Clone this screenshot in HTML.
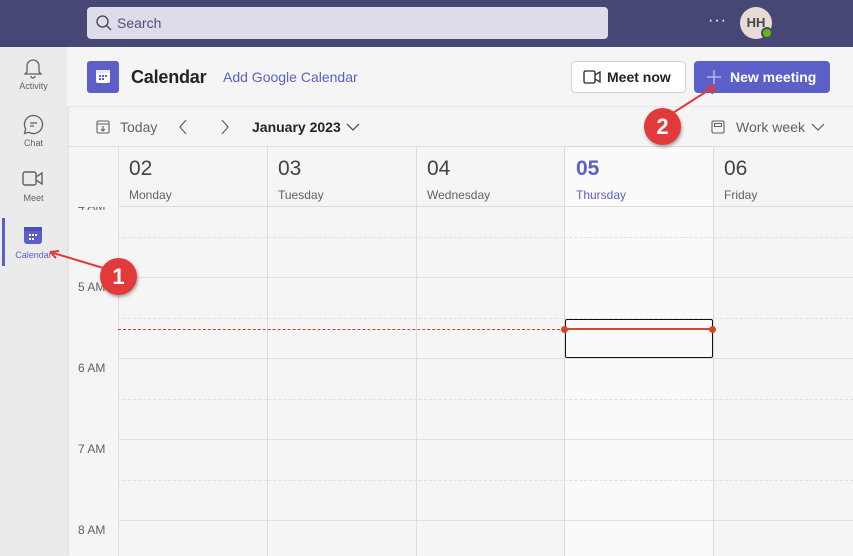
<!DOCTYPE html>
<html><head><style>
*{box-sizing:border-box;margin:0;padding:0}
body{width:853px;height:556px;overflow:hidden;background:#f5f5f5;font-family:"Liberation Sans",sans-serif;position:relative;color:#242424}
.abs{position:absolute}
.top{left:0;top:0;width:853px;height:47px;background:#464775}
.search{left:87px;top:7px;width:521px;height:32px;background:#dcdcea;border-radius:4px}
.side{left:0;top:47px;width:67px;height:509px;background:#ebebeb;box-shadow:1px 0 3px rgba(0,0,0,.12)}
.si{width:67px;text-align:center;font-size:9px;color:#616161}
.hl{background:#e0e0e0}
.vl{background:#dcdcdc;width:1px}
.dash{border-top:1px dashed #e1e1e1;height:0}
.hour{font-size:12px;color:#616161;left:78px}
.day{font-size:21px;color:#424242}
.dn{font-size:12px;color:#616161}
.badge{width:37px;height:37px;border-radius:50%;background:#e23a3a;color:#fff;font-size:22px;font-weight:bold;text-align:center;line-height:37px;box-shadow:1px 2px 3px rgba(0,0,0,.35)}
</style></head><body>
<div class="abs top"></div>
<div class="abs search"></div>
<svg class="abs" style="left:95px;top:14px" width="18" height="18" viewBox="0 0 18 18"><circle cx="7.5" cy="7.5" r="5.5" fill="none" stroke="#444" stroke-width="1.3"/><path d="M11.5 11.5L16 16" stroke="#444" stroke-width="1.3"/></svg>
<div class="abs" style="left:117px;top:15px;font-size:14px;color:#4f4f7a">Search</div>
<div class="abs" style="left:708px;top:12px;color:#fff;font-size:16px;letter-spacing:1px">···</div>
<div class="abs" style="left:740px;top:7px;width:32px;height:32px;border-radius:50%;background:#e6dcd5;color:#444;font-size:13px;font-weight:bold;text-align:center;line-height:32px">HH</div>
<div class="abs" style="left:761px;top:27px;width:12px;height:12px;border-radius:50%;background:#6bb700;border:2px solid #464775"></div>

<div class="abs side"></div>
<svg class="abs" style="left:23px;top:57px" width="20" height="22" viewBox="0 0 20 22"><path d="M4 15V9a6 6 0 0112 0v6l2 2H2z M8 19a2 2 0 004 0" fill="none" stroke="#616161" stroke-width="1.3"/></svg>
<div class="abs si" style="left:0;top:81px">Activity</div>
<svg class="abs" style="left:23px;top:114px" width="21" height="21" viewBox="0 0 21 21"><path d="M10.5 1.5a9 9 0 11-4.5 16.8L1.5 19.5 2.7 15A9 9 0 0110.5 1.5z M7 9h7 M7 12h4" fill="none" stroke="#616161" stroke-width="1.3"/></svg>
<div class="abs si" style="left:0;top:138px">Chat</div>
<svg class="abs" style="left:22px;top:170px" width="22" height="17" viewBox="0 0 22 17"><rect x="1" y="2" width="13" height="13" rx="2" fill="none" stroke="#616161" stroke-width="1.4"/><path d="M14 7l6-4v11l-6-4" fill="none" stroke="#616161" stroke-width="1.4"/></svg>
<div class="abs si" style="left:0;top:193px">Meet</div>
<div class="abs" style="left:2px;top:218px;width:3px;height:48px;background:#5b5fc7"></div>
<svg class="abs" style="left:23px;top:226px" width="20" height="19" viewBox="0 0 20 19"><rect x="1" y="1" width="18" height="17" rx="3" fill="#5b5fc7"/><rect x="1" y="1" width="18" height="4" fill="#4b4fb5"/><g fill="#fff"><rect x="6" y="8" width="2" height="2"/><rect x="9" y="8" width="2" height="2"/><rect x="12" y="8" width="2" height="2"/><rect x="6" y="12" width="2" height="2"/><rect x="9" y="12" width="2" height="2"/></g></svg>
<div class="abs si" style="left:0;top:250px;color:#5b5fc7">Calendar</div>

<div class="abs" style="left:67px;top:47px;width:786px;height:60px;background:#f5f5f5;border-bottom:1px solid #e6e6e6"></div>
<svg class="abs" style="left:87px;top:61px" width="32" height="32" viewBox="0 0 32 32"><rect width="32" height="32" rx="3" fill="#5b5fc7"/><rect x="9" y="9" width="14" height="13" rx="2" fill="#fff"/><rect x="9" y="9" width="14" height="3" fill="#e8e8f8"/><g fill="#5b5fc7"><rect x="12" y="14" width="2" height="2"/><rect x="15" y="14" width="2" height="2"/><rect x="18" y="14" width="2" height="2"/><rect x="12" y="17" width="2" height="2"/><rect x="15" y="17" width="2" height="2"/></g></svg>
<div class="abs" style="left:131px;top:67px;font-size:18px;font-weight:bold;letter-spacing:-0.2px">Calendar</div>
<div class="abs" style="left:223px;top:69px;font-size:14px;color:#5b5fc7">Add Google Calendar</div>
<div class="abs" style="left:571px;top:61px;width:115px;height:32px;background:#fff;border:1px solid #d1d1d1;border-radius:4px"></div>
<svg class="abs" style="left:583px;top:70px" width="18" height="14" viewBox="0 0 18 14"><rect x="1" y="1" width="11" height="12" rx="1.5" fill="none" stroke="#242424" stroke-width="1.3"/><path d="M12 5l5-3v10l-5-3" fill="none" stroke="#242424" stroke-width="1.3"/></svg>
<div class="abs" style="left:607px;top:69px;font-size:14px;font-weight:bold">Meet now</div>
<div class="abs" style="left:694px;top:61px;width:136px;height:32px;background:#5b5fc7;border-radius:4px"></div>
<svg class="abs" style="left:706px;top:69px" width="16" height="16" viewBox="0 0 16 16"><path d="M8 1v14M1 8h14" stroke="#c8c9ee" stroke-width="1.3"/></svg>
<div class="abs" style="left:730px;top:69px;font-size:14px;font-weight:bold;color:#fff">New meeting</div>

<svg class="abs" style="left:96px;top:120px" width="14" height="14" viewBox="0 0 14 14"><rect x="1" y="1" width="12" height="12" rx="1.5" fill="none" stroke="#616161" stroke-width="1.1"/><path d="M1 4h12M7 6v5M5 9l2 2 2-2" fill="none" stroke="#616161" stroke-width="1.1"/></svg>
<div class="abs" style="left:120px;top:119px;font-size:14px;color:#616161">Today</div>
<svg class="abs" style="left:177px;top:119px" width="12" height="16" viewBox="0 0 12 16"><path d="M9 1L3 8l6 7" fill="none" stroke="#616161" stroke-width="1.2"/></svg>
<svg class="abs" style="left:219px;top:119px" width="12" height="16" viewBox="0 0 12 16"><path d="M3 1l6 7-6 7" fill="none" stroke="#616161" stroke-width="1.2"/></svg>
<div class="abs" style="left:252px;top:119px;font-size:14px;font-weight:bold">January 2023</div>
<svg class="abs" style="left:346px;top:122px" width="14" height="10" viewBox="0 0 14 10"><path d="M1 2l6 6 6-6" fill="none" stroke="#424242" stroke-width="1.2"/></svg>
<svg class="abs" style="left:711px;top:120px" width="14" height="14" viewBox="0 0 14 14"><rect x="1" y="1" width="12" height="12" rx="1.5" fill="none" stroke="#616161" stroke-width="1.1"/><rect x="3.5" y="3.5" width="7" height="3" fill="none" stroke="#616161" stroke-width="1"/></svg>
<div class="abs" style="left:736px;top:119px;font-size:14px;color:#616161">Work week</div>
<svg class="abs" style="left:811px;top:122px" width="14" height="10" viewBox="0 0 14 10"><path d="M1 2l6 6 6-6" fill="none" stroke="#616161" stroke-width="1.2"/></svg>

<div class="abs" style="left:67px;top:146px;width:786px;height:1px;background:#dcdcdc"></div>
<div class="abs" style="left:564px;top:147px;width:149px;height:409px;background:#fafafa"></div>
<div class="abs" style="left:118px;top:206px;width:735px;height:1px;background:#dcdcdc"></div>
<div class="abs hl" style="left:118px;top:277px;width:735px;height:1px"></div>
<div class="abs hl" style="left:118px;top:358px;width:735px;height:1px"></div>
<div class="abs hl" style="left:118px;top:439px;width:735px;height:1px"></div>
<div class="abs hl" style="left:118px;top:520px;width:735px;height:1px"></div>
<div class="abs dash" style="left:118px;top:237px;width:735px"></div>
<div class="abs dash" style="left:118px;top:318px;width:735px"></div>
<div class="abs dash" style="left:118px;top:399px;width:735px"></div>
<div class="abs dash" style="left:118px;top:480px;width:735px"></div>
<div class="abs vl" style="left:118px;top:147px;height:409px"></div>
<div class="abs vl" style="left:267px;top:147px;height:409px"></div>
<div class="abs vl" style="left:416px;top:147px;height:409px"></div>
<div class="abs vl" style="left:564px;top:147px;height:409px"></div>
<div class="abs vl" style="left:713px;top:147px;height:409px"></div>

<div class="abs day" style="left:129px;top:157px">02</div><div class="abs dn" style="left:129px;top:188px">Monday</div>
<div class="abs day" style="left:278px;top:157px">03</div><div class="abs dn" style="left:278px;top:188px">Tuesday</div>
<div class="abs day" style="left:427px;top:157px">04</div><div class="abs dn" style="left:427px;top:188px">Wednesday</div>
<div class="abs day" style="left:576px;top:157px;color:#5b5fc7;font-weight:bold">05</div><div class="abs dn" style="left:576px;top:188px;color:#5b5fc7">Thursday</div>
<div class="abs day" style="left:724px;top:157px">06</div><div class="abs dn" style="left:724px;top:188px">Friday</div>

<div class="abs" style="left:67px;top:207px;width:51px;height:20px;overflow:hidden"><div class="abs" style="left:11px;top:-8px;font-size:12px;color:#616161">4 AM</div></div>
<div class="abs hour" style="top:280px">5 AM</div>
<div class="abs hour" style="top:361px">6 AM</div>
<div class="abs hour" style="top:442px">7 AM</div>
<div class="abs hour" style="top:523px">8 AM</div>

<div class="abs" style="left:118px;top:329px;width:447px;border-top:1px dashed #c4432f"></div>
<div class="abs" style="left:565px;top:319px;width:148px;height:39px;border:1px solid #111;border-radius:2px"></div>
<div class="abs" style="left:565px;top:328px;width:148px;height:2px;background:#d24726"></div>
<div class="abs" style="left:561px;top:326px;width:7px;height:7px;border-radius:50%;background:#d24726"></div>
<div class="abs" style="left:709px;top:326px;width:7px;height:7px;border-radius:50%;background:#d24726"></div>

<svg class="abs" style="left:0;top:0" width="853" height="556"><path d="M110 270L50 252M50 252l9 -1M50 252l6 6" stroke="#e23a3a" stroke-width="2" fill="none"/><path d="M665 118L715 86M715 86l-9 2M715 86l-3 8" stroke="#e23a3a" stroke-width="2" fill="none"/></svg>
<div class="abs badge" style="left:100px;top:258px">1</div>
<div class="abs badge" style="left:644px;top:108px">2</div>
</body></html>
